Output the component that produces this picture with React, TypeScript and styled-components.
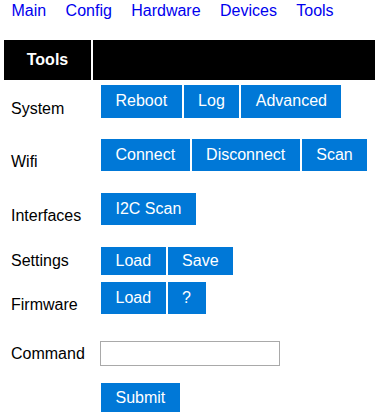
import React from 'react'
import styled, { createGlobalStyle } from 'styled-components'

const GlobalStyle = createGlobalStyle`
  body {
    margin: 0;
    background: #fff;
    font-family: "Liberation Sans", Arial, sans-serif;
    font-size: 16px;
    color: #000;
  }
`

const Nav = styled.nav`
  display: flex;
  gap: 19.4px;
  height: 40px;
  box-sizing: border-box;
  padding: 1.5px 0 0 11.5px;
  line-height: 18px;
  a {
    color: #0000ee;
    text-decoration: none;
  }
`

const Header = styled.div`
  display: flex;
  gap: 2px;
  height: 40px;
  padding: 0 4px;
`

const HeaderTitle = styled.div`
  width: 87px;
  background: #000;
  color: #fff;
  font-weight: bold;
  display: flex;
  align-items: center;
  justify-content: center;
  line-height: 18px;
`

const HeaderFill = styled.div`
  flex: 1;
  background: #000;
`

const Form = styled.div`
  display: flex;
  flex-direction: column;
  padding-left: 11px;
`

const Row = styled.div<{ $space: number; $height?: number }>`
  display: grid;
  grid-template-columns: 89px 1fr;
  height: ${(p) => p.$height ?? 28}px;
  margin-top: ${(p) => p.$space}px;
`

const Label = styled.div<{ $drop: number }>`
  padding-top: ${(p) => p.$drop}px;
  line-height: 18px;
  white-space: nowrap;
`

const Buttons = styled.div`
  display: flex;
  align-items: stretch;
`

const Button = styled.button`
  margin: 0 1px;
  padding: 0 14.5px;
  border: none;
  border-radius: 0;
  background: #0078d7;
  color: #fff;
  font-family: inherit;
  font-size: 16px;
  line-height: 18px;
  cursor: pointer;
`

const Input = styled.input`
  width: 180px;
  height: 25px;
  box-sizing: border-box;
  border: 1px solid #a9a9a9;
  padding: 0 4px;
  font-family: inherit;
  font-size: 14px;
  outline: none;
`

const rows = [
  { label: 'System', space: 5, drop: 14.5, buttons: ['Reboot', 'Log', 'Advanced'] },
  { label: 'Wifi', space: 26, drop: 13.5, buttons: ['Connect', 'Disconnect', 'Scan'] },
  { label: 'Interfaces', space: 26, drop: 14.2, buttons: ['I2C Scan'] },
  { label: 'Settings', space: 26, drop: 5.2, buttons: ['Load', 'Save'] },
  { label: 'Firmware', space: 7, drop: 14.3, buttons: ['Load', '?'] },
]

export default function App() {
  return (
    <>
      <GlobalStyle />
      <Nav>
        {['Main', 'Config', 'Hardware', 'Devices', 'Tools'].map((item) => (
          <a href="#" key={item}>
            {item}
          </a>
        ))}
      </Nav>
      <Header>
        <HeaderTitle>Tools</HeaderTitle>
        <HeaderFill />
      </Header>
      <Form>
        {rows.map((row) => (
          <Row $space={row.space} key={row.label}>
            <Label $drop={row.drop}>{row.label}</Label>
            <Buttons>
              {row.buttons.map((b, i) => (
                <Button key={i}>{b}</Button>
              ))}
            </Buttons>
          </Row>
        ))}
        <Row $space={31} $height={25}>
          <Label $drop={3.8}>Command</Label>
          <Buttons>
            <Input type="text" />
          </Buttons>
        </Row>
        <Row $space={17} $height={29}>
          <span />
          <Buttons>
            <Button>Submit</Button>
          </Buttons>
        </Row>
      </Form>
    </>
  )
}
